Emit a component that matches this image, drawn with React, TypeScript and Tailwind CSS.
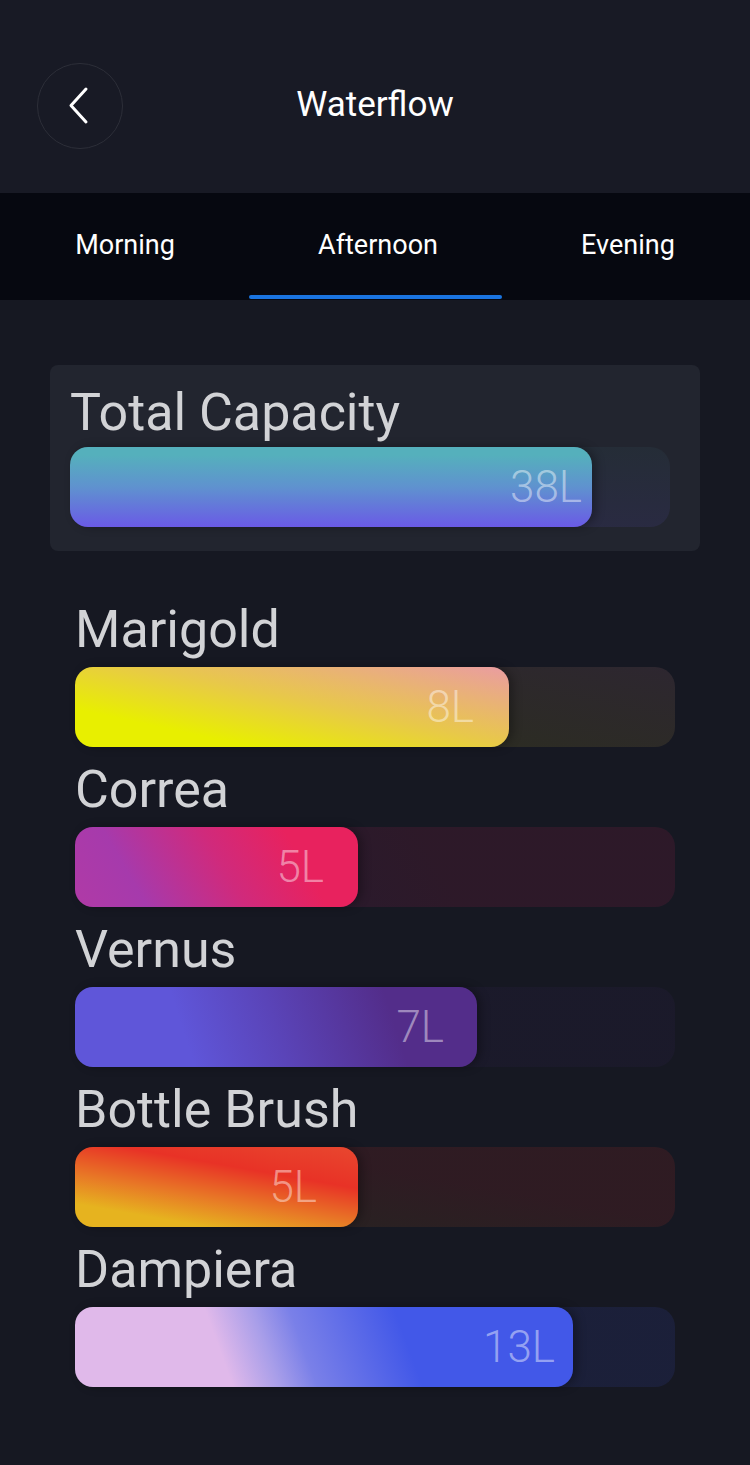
import React from "react";

type Plant = {
  name: string;
  value: string;
  width: number;
  pr: number;
  fill: string;
  track: string;
};

const plants: Plant[] = [
  {
    name: "Marigold",
    value: "8L",
    width: 434,
    pr: 35,
    fill: "bg-[linear-gradient(12deg,#e8ef00_22%,#e8c84a_55%,#ea9ca2_100%)]",
    track: "bg-[linear-gradient(12deg,#e8ef001a_22%,#ea9ca21c_100%)]",
  },
  {
    name: "Correa",
    value: "5L",
    width: 283,
    pr: 34,
    fill: "bg-[linear-gradient(60deg,#b03aa6_0%,#a63aac_22%,#d02a7c_52%,#e8225e_77%)]",
    track: "bg-[linear-gradient(60deg,#a63aac1c_10%,#e8215e1c_60%)]",
  },
  {
    name: "Vernus",
    value: "7L",
    width: 402,
    pr: 33,
    fill: "bg-[linear-gradient(72deg,#5f56d9_28%,#5a44b8_50%,#532d8a_78%)]",
    track: "bg-[linear-gradient(72deg,#5f56d914_10%,#532d8a14_60%)]",
  },
  {
    name: "Bottle Brush",
    value: "5L",
    width: 283,
    pr: 41,
    fill: "bg-[linear-gradient(10deg,#e6b31f_18%,#e87a26_40%,#e83226_68%,#e8472f_100%)]",
    track: "bg-[linear-gradient(10deg,#e6b31f14_10%,#e832261e_60%)]",
  },
  {
    name: "Dampiera",
    value: "13L",
    width: 498,
    pr: 18,
    fill: "bg-[linear-gradient(70deg,#e0b9ea_30%,#a89ee9_39%,#7a80e8_46%,#4258e8_66%)]",
    track: "bg-[linear-gradient(70deg,#e0b9ea10_10%,#4258e81e_60%)]",
  },
];

function Bar({
  width,
  value,
  pr,
  fill,
  track,
}: {
  width: number;
  value: string;
  pr: number;
  fill: string;
  track: string;
}) {
  return (
    <div className={`h-[80px] w-[600px] rounded-[20px] flex ${track}`}>
      <div
        className={`h-full rounded-[18px] flex items-center justify-end shadow-[4px_0_10px_rgba(0,0,0,0.3)] ${fill}`}
        style={{ width, paddingRight: pr }}
      >
        <span className="text-[44px] leading-none font-light text-white/45">{value}</span>
      </div>
    </div>
  );
}

export default function App() {
  return (
    <div
      className="w-[750px] h-[1465px] bg-[#161822] text-white overflow-hidden"
      style={{ fontFamily: "Roboto, 'Noto Sans', sans-serif" }}
    >
      <div className="h-[193px] bg-[#181a25] relative flex items-center justify-center pt-[18px]">
        <div className="absolute left-[37px] top-[63px] w-[86px] h-[86px] rounded-full border border-[#2c2e38] flex items-center justify-center">
          <svg width="24" height="40" viewBox="0 0 24 40" className="-ml-[3px]">
            <path
              d="M19 3 L4 19.5 L19 36"
              fill="none"
              stroke="white"
              strokeWidth="3"
              strokeLinecap="round"
              strokeLinejoin="round"
            />
          </svg>
        </div>
        <div className="text-[35px] text-white">Waterflow</div>
      </div>

      <div className="h-[107px] bg-[#060810] grid grid-cols-3">
        <div className="flex items-center justify-center text-[27px] pb-[3px]">Morning</div>
        <div className="relative flex items-center justify-center text-[27px] pb-[3px]">
          <span className="ml-[6px]">Afternoon</span>
          <div className="absolute left-[-1px] right-[-2px] bottom-[1px] h-[4px] rounded-full bg-[#1a74e0]" />
        </div>
        <div className="flex items-center justify-center text-[27px] pb-[3px] pl-[6px]">Evening</div>
      </div>

      <div className="pt-[65px] pl-[50px]">
        <div className="w-[650px] h-[186px] bg-[#22252f] rounded-[8px] pl-[20px] pt-[19px]">
          <div className="text-[52px] leading-[62px] text-[#d2d3d6] -mt-[2px]">Total Capacity</div>
          <div className="mt-[3px]">
            <Bar
              width={522}
              value="38L"
              pr={10}
              fill="bg-[linear-gradient(180deg,#55b0bc_10%,#5f92cf_50%,#6a5ae6_100%)]"
              track="bg-[linear-gradient(180deg,#55b0bc0e,#6a5ae61a)]"
            />
          </div>
        </div>
      </div>

      <div className="pl-[75px] pt-[48px] flex flex-col gap-[12px]">
        {plants.map((p) => (
          <div key={p.name} className="flex flex-col gap-[6px]">
            <div className="text-[52px] leading-[62px] text-[#d2d3d6]">{p.name}</div>
            <Bar width={p.width} value={p.value} pr={p.pr} fill={p.fill} track={p.track} />
          </div>
        ))}
      </div>
    </div>
  );
}
